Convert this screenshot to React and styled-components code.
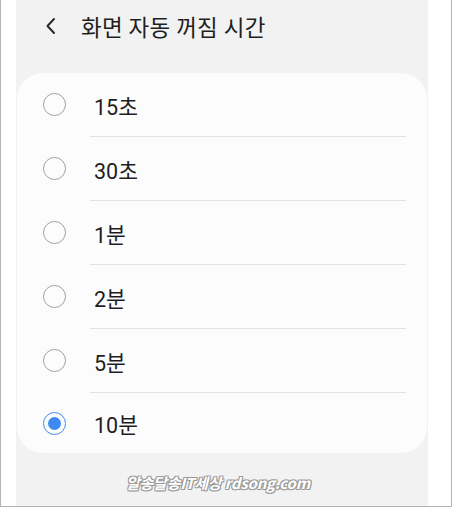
import React, { useState } from "react"
import styled, { createGlobalStyle } from "styled-components"

const GlobalStyle = createGlobalStyle`
  html, body {
    margin: 0;
    padding: 0;
    background: #ffffff;
  }
  body {
    font-family: Roboto, "Noto Sans CJK KR", sans-serif;
  }
`

const Frame = styled.div`
  box-sizing: border-box;
  width: 452px;
  height: 507px;
  border: 1px solid #b4b4b4;
  border-top: none;
  background: #ffffff;
  padding: 0 23px 0 15px;
  display: flex;
`

const Screen = styled.div`
  flex: 1;
  background: #f2f2f2;
  display: flex;
  flex-direction: column;
`

const Header = styled.header`
  height: 73px;
  display: flex;
  align-items: center;
  padding-left: 29px;
  padding-bottom: 21px;
  box-sizing: border-box;
  color: #1f1f1f;
`

const BackButton = styled.span`
  display: inline-flex;
  width: 14px;
  margin-right: 22px;
`

const Title = styled.h1`
  margin: 0;
  font-size: 22.5px;
  font-weight: 400;
  letter-spacing: 0.2px;
`

const Card = styled.ul`
  list-style: none;
  margin: 0 1px;
  padding: 0;
  background: #fcfcfc;
  border-radius: 26px;
  display: flex;
  flex-direction: column;
`

const Row = styled.li`
  height: ${(p) => (p.$last ? 60 : 63)}px;
  display: flex;
  align-items: center;
  padding-left: 26px;
  cursor: pointer;
  border-bottom: ${(p) => (p.$last ? "none" : "1px solid transparent")};
  position: relative;

  &::after {
    content: "";
    display: ${(p) => (p.$last ? "none" : "block")};
    position: absolute;
    left: 73px;
    right: 21px;
    bottom: -1px;
    height: 1px;
    background: #e2e2e2;
  }
`

const Radio = styled.span`
  box-sizing: border-box;
  width: 23px;
  height: 23px;
  border-radius: 50%;
  border: 1.5px solid ${(p) => (p.$checked ? "#3d8bf2" : "#a0a0a0")};
  display: inline-flex;
  align-items: center;
  justify-content: center;
  margin-right: 28px;
  flex-shrink: 0;

  &::after {
    content: "";
    display: ${(p) => (p.$checked ? "block" : "none")};
    width: 13px;
    height: 13px;
    border-radius: 50%;
    background: #3d8bf2;
  }
`

const Label = styled.span`
  font-size: 21.5px;
  color: #1e1e1e;
  margin-top: 1px;
`

const Footer = styled.div`
  flex: 1;
  display: flex;
  justify-content: center;
  padding-top: 19px;
  padding-right: 8px;
`

const Watermark = styled.span`
  font-family: "Noto Sans CJK KR", sans-serif;
  font-size: 15px;
  font-weight: 700;
  font-style: italic;
  color: #ffffff;
  letter-spacing: -0.2px;
  text-shadow:
    -1px -1px 0 #9a9a9a,
    1px -1px 0 #9a9a9a,
    -1px 1px 0 #9a9a9a,
    1px 1px 0 #9a9a9a,
    0 1px 0 #9a9a9a,
    1px 0 0 #9a9a9a;
`

const options = ["15초", "30초", "1분", "2분", "5분", "10분"]

const App = () => {
  const [selected, setSelected] = useState("10분")

  return (
    <>
      <GlobalStyle />
      <Frame>
        <Screen>
          <Header>
            <BackButton>
              <svg width="12" height="18" viewBox="0 0 12 18" fill="none">
                <path
                  d="M9 2L2.5 9L9 16"
                  stroke="#2a2a2a"
                  strokeWidth="2"
                  strokeLinecap="round"
                  strokeLinejoin="round"
                />
              </svg>
            </BackButton>
            <Title>화면 자동 꺼짐 시간</Title>
          </Header>

          <Card>
            {options.map((option, i) => (
              <Row
                key={option}
                $last={i === options.length - 1}
                onClick={() => setSelected(option)}
              >
                <Radio $checked={selected === option} />
                <Label>{option}</Label>
              </Row>
            ))}
          </Card>

          <Footer>
            <Watermark>알송달송IT세상 rdsong.com</Watermark>
          </Footer>
        </Screen>
      </Frame>
    </>
  )
}

export default App
